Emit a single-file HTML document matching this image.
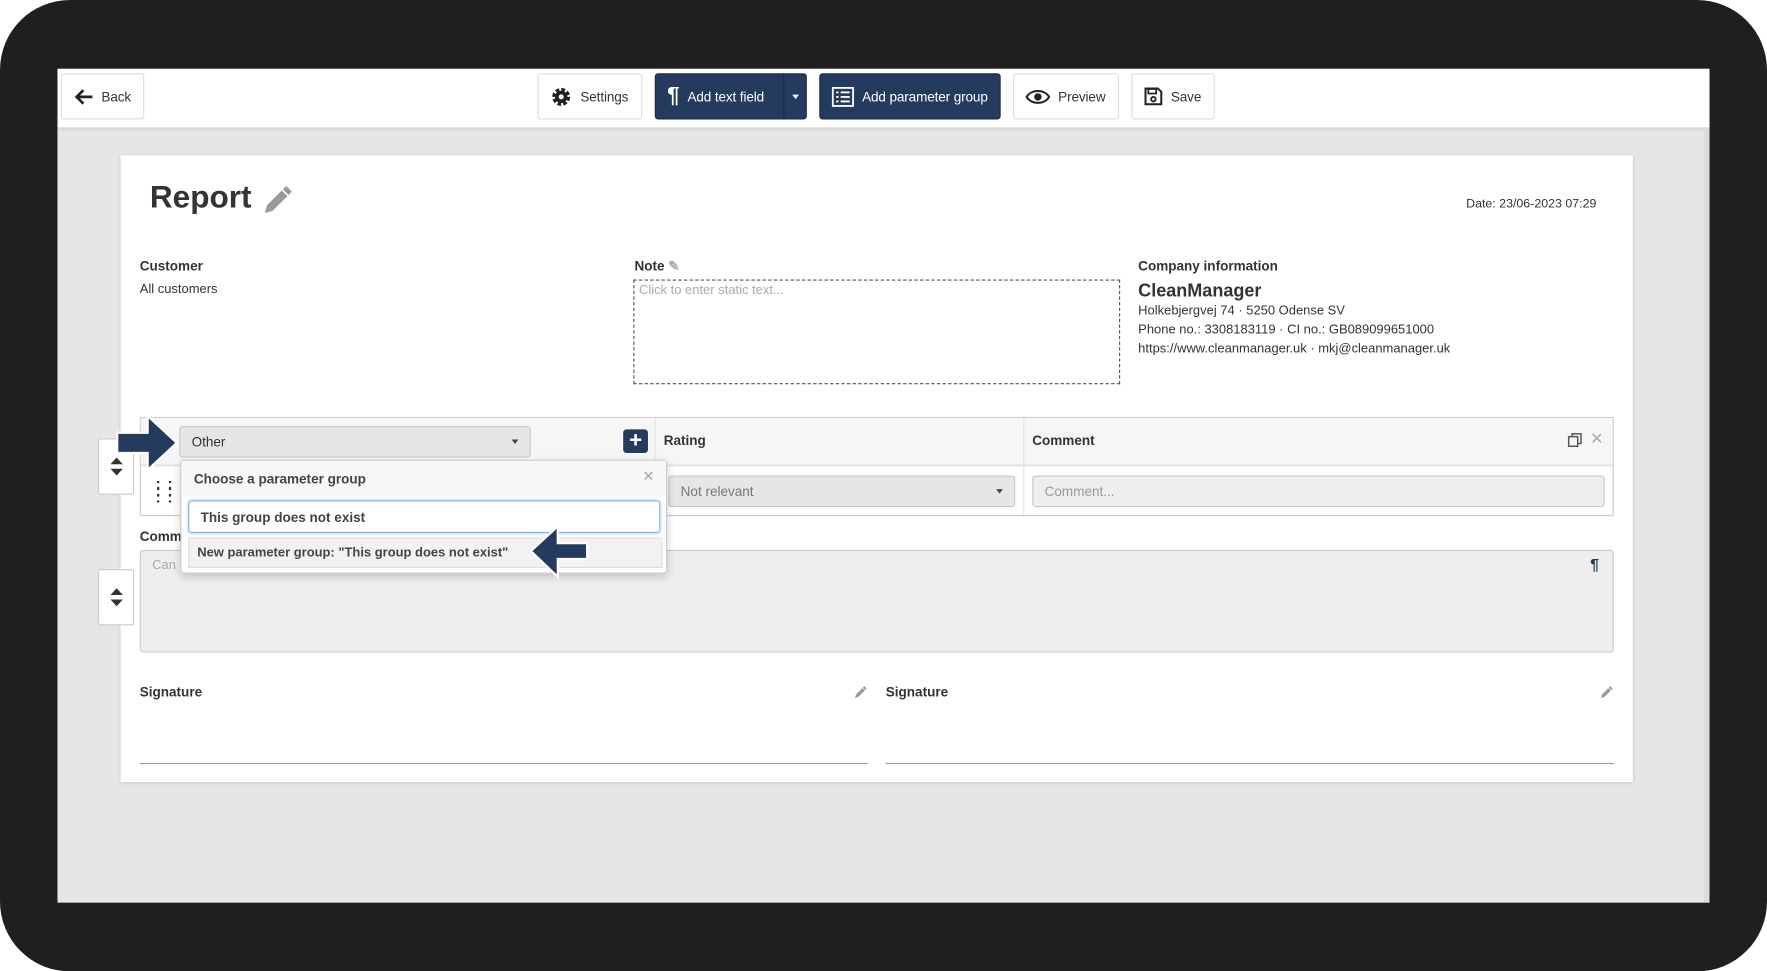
<!DOCTYPE html>
<html><head><meta charset="utf-8"><style>
*{box-sizing:border-box;margin:0;padding:0}
html,body{width:1767px;height:971px;overflow:hidden;background:#fff;font-family:"Liberation Sans",Arial,sans-serif;color:#333}
#w{position:absolute;left:0;top:0;width:1568px;height:862px;transform:scale(1.126913);transform-origin:0 0}
.a{position:absolute}
.frame{left:0;top:0;width:1568px;height:862px;background:#1f1f1f;border-radius:62px}
.screen{left:51px;top:61px;width:1466px;height:740px;background:#e5e6e8;overflow:hidden}
.top{left:0;top:0;width:1466px;height:53px;background:#fff;border-bottom:1px solid #d5d5d5;box-shadow:0 1px 3px rgba(0,0,0,.1)}
.btn{position:absolute;top:4px;height:41px;border:1px solid #ddd;border-radius:3px;background:#fff;font-size:12px;display:flex;align-items:center;padding-left:10px;gap:7px;color:#333;letter-spacing:-0.1px}
.btn.d{background:#243b5e;border-color:#1b2d49;color:#fff}
.paper{left:56px;top:77px;width:1342px;height:556px;background:#fff;box-shadow:0 1px 3px rgba(0,0,0,.15)}
.lbl{font-size:12px;font-weight:bold;position:absolute}
.t{font-size:11.5px;position:absolute}
.sel{position:absolute;background:#e6e6e6;border:1px solid #c9c9c9;border-radius:3px;font-size:12px;padding-left:10px;display:flex;align-items:center}
.car{position:absolute;right:10px;top:50%;margin-top:-2px;border-left:3px solid transparent;border-right:3px solid transparent;border-top:4px solid #444}
.mv{position:absolute;width:32px;height:50px;background:#fff;border:1px solid #ccc;border-radius:2px}
</style></head><body><div id="w">
<div class="a frame"></div>
<div class="a screen">
 <div class="a top">
  <div class="btn" style="left:3px;width:74px"><svg width="18" height="16" viewBox="0 0 18 16"><path d="M9 2 3 8l6 6M3 8h14" stroke="#222" stroke-width="2.4" fill="none"/></svg>Back</div>
  <div class="btn" style="left:426px;width:93px"><svg width="20" height="20" viewBox="0 0 20 20"><circle cx="10" cy="10" r="6" fill="none" stroke="#222" stroke-width="4" stroke-dasharray="3 1.7"/><circle cx="10" cy="10" r="5.5" fill="#222"/><circle cx="10" cy="10" r="2.2" fill="#fff"/></svg>Settings</div>
  <div class="btn d" style="left:530px;width:135px"><span style="font-size:20px;font-weight:bold">¶</span>Add text field<span style="position:absolute;left:113px;top:0;height:39px;border-left:1px solid #1a2b45"></span><span style="position:absolute;left:121px;top:18px;border-left:3px solid transparent;border-right:3px solid transparent;border-top:4px solid #fff"></span></div>
  <div class="btn d" style="left:676px;width:161px"><svg width="20" height="18" viewBox="0 0 20 18"><rect x="1" y="1" width="18" height="16" fill="none" stroke="#fff" stroke-width="1.6"/><path d="M4 5h2M4 9h2M4 13h2M8 5h8M8 9h8M8 13h8" stroke="#fff" stroke-width="1.6"/></svg>Add parameter group</div>
  <div class="btn" style="left:848px;width:94px"><svg width="22" height="14" viewBox="0 0 22 14"><path d="M1 7C5 0 17 0 21 7 17 14 5 14 1 7Z" fill="none" stroke="#222" stroke-width="1.8"/><circle cx="11" cy="7" r="3.3" fill="#222"/></svg>Preview</div>
  <div class="btn" style="left:953px;width:74px"><svg width="17" height="17" viewBox="0 0 17 17"><path d="M1.5 1.5h11l3 3v11h-14z" fill="none" stroke="#222" stroke-width="1.8"/><rect x="4" y="2" width="7" height="4" fill="none" stroke="#222" stroke-width="1.5"/><circle cx="8.5" cy="11" r="2" fill="none" stroke="#222" stroke-width="1.6"/></svg>Save</div>
 </div>
 <div class="a" style="left:1461px;top:53px;width:5px;height:687px;background:#dcdcdc"></div>
 <div class="a paper">
  <div class="a" style="left:26px;top:21px;font-size:28px;font-weight:bold;color:#333">Report</div>
  <svg class="a" style="left:124px;top:25px" width="30" height="30" viewBox="0 0 30 30"><path d="M4 26l2-7L19 6l5 5-13 13z" fill="#9a9a9a"/><path d="M20 5l3-3 5 5-3 3z" fill="#9a9a9a"/></svg>
  <div class="t" style="left:1194px;top:37px;font-size:11px">Date: 23/06-2023 07:29</div>
  <div class="lbl" style="left:17px;top:91px">Customer</div>
  <div class="t" style="left:17px;top:113px">All customers</div>
  <div class="lbl" style="left:456px;top:91px">Note <span style="color:#aaa">✎</span></div>
  <div class="a" style="left:455px;top:110px;width:432px;height:93px;border:1px dashed #555"><div class="t" style="left:4px;top:3px;color:#aaa">Click to enter static text...</div></div>
  <div class="lbl" style="left:903px;top:91px">Company information</div>
  <div class="a" style="left:903px;top:112px;font-size:16px;font-weight:bold">CleanManager</div>
  <div class="t" style="left:903px;top:132px">Holkebjergvej 74 · 5250 Odense SV</div>
  <div class="t" style="left:903px;top:149px">Phone no.: 3308183119 · CI no.: GB089099651000</div>
  <div class="t" style="left:903px;top:166px">https://www.cleanmanager.uk · mkj@cleanmanager.uk</div>
  <div class="a" style="left:17px;top:232px;width:1308px;height:88px;border:1px solid #ccc"></div>
  <div class="a" style="left:18px;top:233px;width:1306px;height:43px;background:#f6f6f6;border-bottom:2px solid #e4e4e4"></div>
  <div class="a" style="left:474px;top:233px;height:86px;border-left:1px solid #e3e3e3"></div>
  <div class="a" style="left:801px;top:233px;height:86px;border-left:1px solid #e3e3e3"></div>
  <div class="sel" style="left:52px;top:240px;width:312px;height:28px">Other<span class="car"></span></div>
  <div class="a" style="left:446px;top:243px;width:22px;height:21px;background:#243b5e;border-radius:3px;color:#fff;font-size:20px;line-height:20px;text-align:center;font-weight:bold">+</div>
  <div class="lbl" style="left:482px;top:246px">Rating</div>
  <div class="lbl" style="left:809px;top:246px">Comment</div>
  <svg class="a" style="left:1284px;top:246px" width="13" height="13" viewBox="0 0 13 13"><rect x="1" y="3.5" width="8" height="8.5" fill="none" stroke="#555" stroke-width="1.3"/><path d="M4 3.5V1h8v8.5H9" fill="none" stroke="#555" stroke-width="1.3"/></svg>
  <div class="a" style="left:1304px;top:243px;color:#aaa;font-size:14px">✕</div>
  <div class="a" style="left:31px;top:288px;font-size:14px;line-height:6px;letter-spacing:1px;font-weight:bold">: :<br>: :<br>: :</div>
  <div class="sel" style="left:486px;top:284px;width:308px;height:28px;color:#777">Not relevant<span class="car"></span></div>
  <div class="sel" style="left:809px;top:284px;width:508px;height:28px;color:#999;background:#eee">Comment...</div>
  <div class="lbl" style="left:17px;top:331px">Comm</div>
  <div class="a" style="left:17px;top:350px;width:1308px;height:91px;background:#eee;border:1px solid #ccc;border-radius:3px"><div class="t" style="left:10px;top:7px;color:#aaa">Can</div><div class="a" style="right:12px;top:4px;font-size:14px;color:#243b5e;font-weight:bold">¶</div></div>
  <div class="lbl" style="left:17px;top:469px">Signature</div>
  <div class="lbl" style="left:679px;top:469px">Signature</div>
  <svg class="a" style="left:650px;top:470px" width="13" height="13" viewBox="0 0 30 30"><path d="M4 26l2-7L19 6l5 5-13 13z" fill="#999"/><path d="M20 5l3-3 5 5-3 3z" fill="#999"/></svg>
  <svg class="a" style="left:1312px;top:470px" width="13" height="13" viewBox="0 0 30 30"><path d="M4 26l2-7L19 6l5 5-13 13z" fill="#999"/><path d="M20 5l3-3 5 5-3 3z" fill="#999"/></svg>
  <div class="a" style="left:17px;top:539px;width:646px;border-top:1px solid #999"></div>
  <div class="a" style="left:679px;top:539px;width:646px;border-top:1px solid #999"></div>
  <div class="a" style="left:53px;top:270px;width:432px;height:101px;background:#fff;border:1px solid #ccc;border-radius:3px;box-shadow:0 3px 8px rgba(0,0,0,.18)">
   <div class="a" style="left:0;top:0;width:430px;height:32px;background:#f7f7f7"></div>
   <div class="lbl" style="left:11px;top:9px;color:#444">Choose a parameter group</div>
   <div class="a" style="left:409px;top:6px;color:#aaa;font-size:13px">✕</div>
   <div class="a" style="left:6px;top:35px;width:419px;height:29px;border:1px solid #7cb4e8;border-radius:3px;box-shadow:0 0 3px #a8d0f3"><div class="lbl" style="left:10px;top:7px;color:#444">This group does not exist</div></div>
   <div class="a" style="left:6px;top:68px;width:421px;height:27px;background:#f2f2f2;border:1px solid #ddd"><div class="lbl" style="left:7px;top:7px;color:#444;font-size:11.5px">New parameter group: "This group does not exist"</div></div>
  </div>
 </div>
 <div class="mv" style="left:36px;top:328px"><svg class="a" style="left:9px;top:15px" width="13" height="18" viewBox="0 0 13 18"><path d="M6.5 1 12 7H1zM6.5 17 12 11H1z" fill="#333"/></svg></div>
 <div class="mv" style="left:36px;top:444px"><svg class="a" style="left:9px;top:15px" width="13" height="18" viewBox="0 0 13 18"><path d="M6.5 1 12 7H1zM6.5 17 12 11H1z" fill="#333"/></svg></div>
</div>
<svg class="a" style="left:100px;top:366px" width="62" height="54" viewBox="0 0 62 54"><path d="M4 18h27V3l26 24-26 24V36H4z" fill="#243b5e" stroke="#fff" stroke-width="2"/></svg>
<svg class="a" style="left:466px;top:465px" width="60" height="50" viewBox="0 0 60 50"><path d="M55 17H29V2L5 24l24 23V31h26z" fill="#243b5e" stroke="#fff" stroke-width="2"/></svg>
</div></body></html>
